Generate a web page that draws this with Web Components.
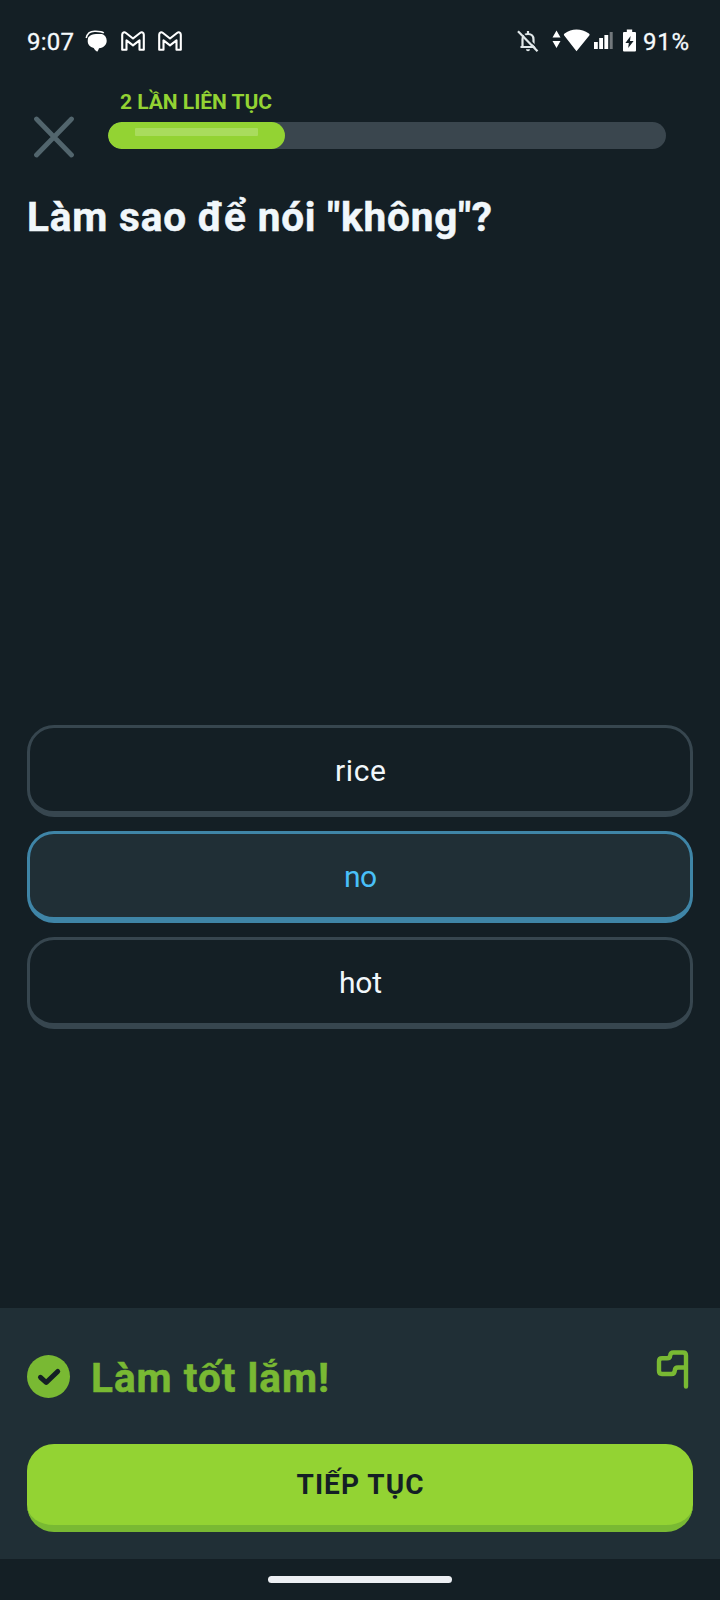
<!DOCTYPE html>
<html lang="vi">
<head>
<meta charset="utf-8">
<title>Duolingo</title>
<style>
html,body{margin:0;background:#141f25}
body{width:720px;height:1600px;overflow:hidden;font-family:Roboto,"Noto Sans",sans-serif}
</style>
</head>
<body>
<lesson-screen></lesson-screen>
<script>
const define=(name,html,init)=>customElements.define(name,class extends HTMLElement{
  connectedCallback(){
    if(this.shadowRoot)return;
    const t=document.createElement('template');
    t.innerHTML=html;
    this.attachShadow({mode:'open'}).append(t.content.cloneNode(true));
    if(init)init(this);
  }
});

/* Spreads a single line of text over a fixed advance width by tracking. */
define('tracked-text',`<style>
:host{display:block;white-space:nowrap;flex:none}
span{display:inline-block}
</style><span><slot></slot></span>`,el=>{
  const w=+el.getAttribute('width'),s=el.shadowRoot.querySelector('span');
  const n=[...el.textContent].length;
  s.style.letterSpacing=((w-s.getBoundingClientRect().width)/(n-1))+'px';
  el.style.width=w+'px';
});

define('mail-icon',`<style>:host{display:block;flex:none;margin-left:11px}svg{display:block}</style>
<svg width="26" height="22" viewBox="0 0 26 22"><path d="M2.200 19.700V4.800C2.200 2.300 4.300 1.700 6 3l7 5.500L20 3c1.700-1.300 3.800-.7 3.800 1.800v14.900h-4.300V10.300L13 15.300 6.500 10.300v9.400Z" fill="none" stroke="#fff" stroke-width="2.100" stroke-linejoin="round"/></svg>`);

define('status-bar',`<style>
:host{display:flex;box-sizing:border-box;height:83px;padding:0 31px 1px 27px;align-items:center;justify-content:space-between;color:#f5fafc;font-size:24px;line-height:28px;-webkit-text-stroke:.3px #f5fafc}
div{display:flex;align-items:center}
svg{display:block;flex:none}
div tracked-text{padding-top:2px}
</style>
<div>
  <tracked-text width="47">9:07</tracked-text>
  <svg style="margin-left:11px" width="24" height="24" viewBox="0 0 24 24"><path d="M3.200 8.500C5.500 5.700 8 5 11 5h6c3 1 4.700 3.400 4.700 6.700 0 4-3 7-7.700 7.500q-.7 2-1.800 3.600Q9.700 21.500 8.700 19C5 18 2.700 15.500 2.700 12q0-2 .5-3.500Z" fill="#fff"/><path d="M1.200 9C2.200 4.300 5.500 2.200 9.500 2.200c4.500 0 7-.2 9.300 1.800" fill="none" stroke="#fff" stroke-width="1.500"/></svg>
  <mail-icon></mail-icon>
  <mail-icon></mail-icon>
</div>
<div>
  <svg width="24" height="24" viewBox="0 0 24 24" fill="none" stroke="#e1e8ea" stroke-width="2.200"><path d="M4.500 18h15M6.500 18V10.500c0-3.300 2-5.500 5.500-5.500s5.500 2.200 5.500 5.500V18M12 2v3"/><path d="M10 20.200h4c0 1.200-.9 2-2 2s-2-.8-2-2Z" fill="#e1e8ea" stroke="none"/><path d="m3.700 1.300 19 19" stroke="#141f25" stroke-width="1.600"/><path d="m2 2.300 19.500 20"/></svg>
  <svg style="margin:-3px 0 0 12px" width="38" height="24" viewBox="0 0 38 24" fill="#fff"><path d="m4.500 2.500 4 7h-8ZM4.500 20l4-7h-8ZM24.500 23.200 12.200 7.500c-.5-.8-.4-1.500.4-2.100C16.500 2.700 20 1.500 24.500 1.500S33 2.700 36.900 5.400c.8.600.9 1.300.4 2.100Z"/></svg>
  <svg style="margin:-3px 0 0 3px" width="21" height="20" viewBox="0 0 21 20" fill="#fff"><path d="M1 12h3.800v7H1ZM6.200 8h3.800v11H6.200ZM11.400 5h3.800v14h-3.800Z"/><path d="M16.700 2h3v17h-3Z" opacity=".4"/></svg>
  <svg style="margin:-2px 0 0 9px" width="13" height="24" viewBox="0 0 13 24"><path d="M3.800 1.500h5.400V4H12q1 0 1 1v17.500q0 1-1 1H1q-1 0-1-1V5q0-1 1-1h2.800Z" fill="#fff"/><path d="m7.600 8-5.200 7h3.400l-.6 5 5.400-7H7Z" fill="#141f25"/></svg>
  <tracked-text width="46" style="margin-left:7px">91%</tracked-text>
</div>`);

define('lesson-header',`<style>
:host{display:flex;box-sizing:border-box;height:110px;padding:7px 54px 0 31px;align-items:flex-start}
svg{display:block;margin:24px 31px 0 0;flex:none}
.main{flex:1}
.streak{color:#93d333;font:bold 21px/24px Roboto;margin:0 0 8px 12px}
.track{height:27px;border-radius:14px;background:#3a464e;overflow:hidden}
.fill{height:27px;width:177px;border-radius:14px;background:#93d333;box-sizing:border-box;padding:5.500px 27px 0}
.shine{height:8px;border-radius:1px;background:#a9dc5d}
</style>
<svg width="46" height="44" viewBox="0 0 46 44"><path d="m5.500 5 35 36M40.500 5l-35 36" stroke="#52656d" stroke-width="4.800" stroke-linecap="round"/></svg>
<div class="main"><tracked-text class="streak" width="152">2 LẦN LIÊN TỤC</tracked-text>
<div class="track"><div class="fill"><div class="shine"></div></div></div></div>`);

define('choice-card',`<style>
:host{display:flex;box-sizing:border-box;height:92px;border:3px solid #37464f;border-bottom-width:6px;border-radius:27px;align-items:center;justify-content:center;color:#f1f7fb;font-size:30px;line-height:36px;padding:2px 0 0 1px}
:host([selected]){border-color:#3f85a7;background:#202f36;color:#49c0f8}
</style><slot></slot>`);

define('feedback-panel',`<style>
:host{display:block;box-sizing:border-box;height:251px;background:#202f36;padding:0 27px}
.row{display:flex;height:136px;align-items:center}
svg{display:block;flex:none}
.msg{font:bold 40.500px/48px Roboto;color:#79b933;padding-top:3px;-webkit-text-stroke:.5px #79b933}
.flag{margin:0 3px 13px auto}
button{display:block;width:100%;height:88px;border:0;border-bottom:7px solid #79b933;border-radius:27px;background:#93d333;color:#141f25;font:bold 28px/34px Roboto;padding:0}
button tracked-text{margin:0 auto}
.row tracked-text{margin:0 0 0 20px}
</style>
<div class="row">
<svg width="44" height="44" viewBox="0 0 44 44"><circle cx="21.500" cy="22.500" r="21.500" fill="#79b933"/><path d="m13.500 23.300 5.700 5.200 11.500-11" fill="none" stroke="#141f25" stroke-width="5" stroke-linecap="round" stroke-linejoin="round"/></svg>
<tracked-text class="msg" width="238">Làm tốt lắm!</tracked-text>
<svg class="flag" width="35" height="40" viewBox="0 0 35 40"><path d="M31 36.500V5.500Q31 2.500 28 2.500H18.500Q15.500 2.500 15.200 5.500 15 8.300 12 8.300H7Q4 8.300 4 11.300V21Q4 24 7 24H16.500Q19.500 24 19.800 20.500 20 17.500 23 17.500H31" fill="none" stroke="#79b933" stroke-width="4.400" stroke-linecap="round" stroke-linejoin="round"/></svg>
</div>
<button><tracked-text width="127">TIẾP TỤC</tracked-text></button>`);

define('lesson-screen',`<style>
:host{display:flex;flex-direction:column;width:720px;height:1600px;background:#141f25}
.title{margin-left:27px;font:bold 40.500px/48px Roboto;color:#f1f7fb;-webkit-text-stroke:.5px #f1f7fb}
.choices{display:grid;gap:14px;margin:484px 27px 0}
feedback-panel{margin-top:279px}
.nav{height:41px;display:flex;box-sizing:border-box;padding-top:17px;justify-content:center}
.nav i{width:184px;height:7px;border-radius:4px;background:#eceff3}
</style>
<status-bar></status-bar>
<lesson-header></lesson-header>
<tracked-text class="title" width="465">Làm sao để nói "không"?</tracked-text>
<div class="choices">
<choice-card><tracked-text width="51">rice</tracked-text></choice-card>
<choice-card selected><tracked-text width="33">no</tracked-text></choice-card>
<choice-card><tracked-text width="43">hot</tracked-text></choice-card>
</div>
<feedback-panel></feedback-panel>
<div class="nav"><i></i></div>`);
</script>
</body>
</html>
